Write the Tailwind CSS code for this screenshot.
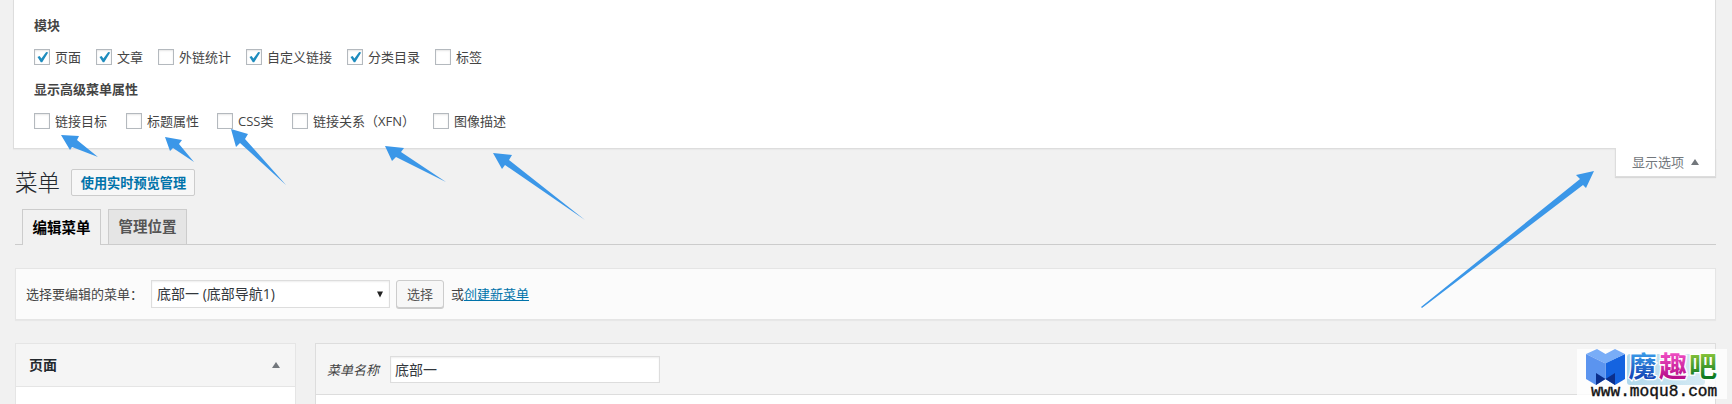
<!DOCTYPE html>
<html lang="zh-CN">
  <head>
    <meta charset="UTF-8" />
    <meta name="viewport" content="width=device-width, initial-scale=1.0" />
    <title>菜单</title>
    <script src="https://cdn.jsdelivr.net/npm/@tailwindcss/browser@4"></script>
  </head>

  <body
    class="relative h-[404px] overflow-hidden bg-[#f1f1f1] pl-[13px] pr-4 font-['Open_Sans','Noto_Sans_CJK_SC',sans-serif] text-[13px] leading-5 text-[#444] whitespace-nowrap"
  >
    <!-- Screen options panel -->
    <div
      class="h-[149px] border border-t-0 border-[#ddd] bg-white pl-5 pt-[15px] shadow-[0_1px_1px_rgba(0,0,0,0.03)]"
    >
      <h2 class="h-5 font-bold text-[#444]">模块</h2>
      <div class="mt-3 flex h-5 items-center">
        <label class="flex w-[62px] items-center gap-[5px]">
          <span class="size-4 border border-[#b4b9be] bg-white shadow-[inset_0_1px_2px_rgba(0,0,0,0.1)]">
            <svg class="size-3.5" viewBox="0 0 14 14"><path d="M2.5 7 4.6 6.1 6.4 8.6 11.2 2.1 13.2 2.6 7.2 12.2 5.8 12.2Z" fill="#1e8cbe" /></svg>
          </span>
          页面
        </label>
        <label class="flex w-[62px] items-center gap-[5px]">
          <span class="size-4 border border-[#b4b9be] bg-white shadow-[inset_0_1px_2px_rgba(0,0,0,0.1)]">
            <svg class="size-3.5" viewBox="0 0 14 14"><path d="M2.5 7 4.6 6.1 6.4 8.6 11.2 2.1 13.2 2.6 7.2 12.2 5.8 12.2Z" fill="#1e8cbe" /></svg>
          </span>
          文章
        </label>
        <label class="flex w-[88px] items-center gap-[5px]">
          <span class="size-4 border border-[#b4b9be] bg-white shadow-[inset_0_1px_2px_rgba(0,0,0,0.1)]"></span>
          外链统计
        </label>
        <label class="flex w-[101px] items-center gap-[5px]">
          <span class="size-4 border border-[#b4b9be] bg-white shadow-[inset_0_1px_2px_rgba(0,0,0,0.1)]">
            <svg class="size-3.5" viewBox="0 0 14 14"><path d="M2.5 7 4.6 6.1 6.4 8.6 11.2 2.1 13.2 2.6 7.2 12.2 5.8 12.2Z" fill="#1e8cbe" /></svg>
          </span>
          自定义链接
        </label>
        <label class="flex w-[88px] items-center gap-[5px]">
          <span class="size-4 border border-[#b4b9be] bg-white shadow-[inset_0_1px_2px_rgba(0,0,0,0.1)]">
            <svg class="size-3.5" viewBox="0 0 14 14"><path d="M2.5 7 4.6 6.1 6.4 8.6 11.2 2.1 13.2 2.6 7.2 12.2 5.8 12.2Z" fill="#1e8cbe" /></svg>
          </span>
          分类目录
        </label>
        <label class="flex items-center gap-[5px]">
          <span class="size-4 border border-[#b4b9be] bg-white shadow-[inset_0_1px_2px_rgba(0,0,0,0.1)]"></span>
          标签
        </label>
      </div>
      <h2 class="mt-3 h-5 font-bold text-[#444]">显示高级菜单属性</h2>
      <div class="mt-3 flex h-5 items-center">
        <label class="flex w-[92px] items-center gap-[5px]">
          <span class="size-4 border border-[#b4b9be] bg-white shadow-[inset_0_1px_2px_rgba(0,0,0,0.1)]"></span>
          链接目标
        </label>
        <label class="flex w-[91px] items-center gap-[5px]">
          <span class="size-4 border border-[#b4b9be] bg-white shadow-[inset_0_1px_2px_rgba(0,0,0,0.1)]"></span>
          标题属性
        </label>
        <label class="flex w-[75px] items-center gap-[5px]">
          <span class="size-4 border border-[#b4b9be] bg-white shadow-[inset_0_1px_2px_rgba(0,0,0,0.1)]"></span>
          CSS类
        </label>
        <label class="flex w-[141px] items-center gap-[5px]">
          <span class="size-4 border border-[#b4b9be] bg-white shadow-[inset_0_1px_2px_rgba(0,0,0,0.1)]"></span>
          链接关系（XFN）
        </label>
        <label class="flex items-center gap-[5px]">
          <span class="size-4 border border-[#b4b9be] bg-white shadow-[inset_0_1px_2px_rgba(0,0,0,0.1)]"></span>
          图像描述
        </label>
      </div>
    </div>

    <!-- Heading, with the screen options toggle hanging from the panel -->
    <div class="flex h-[60px] items-start justify-between">
      <div class="ml-0.5 mt-[19px] flex h-7 items-center">
        <h1 class="w-14 pt-0.5 text-[22.5px] font-light text-[#23282d]">菜单</h1>
        <a class="flex h-[27px] w-[124px] items-center justify-center rounded-xs border border-[#ccc] bg-[#f7f7f7] pl-px pt-px text-[13.2px] font-bold text-[#0073aa]">使用实时预览管理</a>
      </div>
      <button
        class="relative -mt-px flex h-[29px] w-[101px] items-center border border-t-0 border-[#ddd] bg-white pb-px pl-4 text-[#72777c] shadow-[0_1px_1px_rgba(0,0,0,0.1)]"
      >
        显示选项
        <svg class="ml-[7px] h-1.5 w-2" viewBox="0 0 8 6"><path d="M4 0 8 6H0Z" fill="#72777c" /></svg>
      </button>
    </div>

    <div class="ml-0.5">
      <nav class="flex h-9 items-start gap-[7px] border-b border-[#ccc] pl-[7px] text-[14.5px] font-bold">
        <a class="flex h-9 w-[79px] items-center justify-center border border-b-0 border-[#ccc] bg-[#f1f1f1] text-black">编辑菜单</a>
        <a class="flex h-[35px] w-[79px] items-center justify-center border border-b-0 border-[#ccc] bg-[#e5e5e5] text-[#555]">管理位置</a>
      </nav>

      <!-- Menu picker -->
      <div
        class="mt-[23px] flex h-[52px] items-center border border-[#e5e5e5] bg-[#fbfbfb] pl-2.5 shadow-[0_1px_1px_rgba(0,0,0,0.04)]"
      >
        <span class="w-[125px]">选择要编辑的菜单：</span>
        <div class="flex h-7 w-[239px] items-center justify-between border border-[#ddd] bg-white pl-[5px] pr-1.5 text-sm text-[#32373c] shadow-[inset_0_1px_2px_rgba(0,0,0,0.07)]">
          <span>底部一 (底部导航1)</span>
          <svg class="h-[7px] w-1.5" viewBox="0 0 6 7"><path d="M0 0.5H6L3 6.5Z" fill="#222" /></svg>
        </div>
        <button class="ml-1.5 h-7 w-12 rounded-[3px] border border-[#ccc] bg-[#f7f7f7] leading-[26px] text-[#555] shadow-[0_1px_0_#ccc]">选择</button>
        <span class="ml-[7px]">或<a class="text-[#0073aa] underline">创建新菜单</a></span>
      </div>

      <div class="mt-[23px] flex gap-[19px]">
        <div class="h-20 w-[281px] border border-[#e5e5e5] bg-white">
          <div class="flex h-[43px] items-center justify-between border-b border-[#e5e5e5] bg-[#f5f5f5] pl-[13px] pr-[15px]">
            <h3 class="text-sm font-bold text-[#23282d]">页面</h3>
            <svg class="h-1.5 w-2" viewBox="0 0 8 6"><path d="M4 0 8 6H0Z" fill="#72777c" /></svg>
          </div>
        </div>
        <div class="h-20 flex-1 border border-[#ddd] bg-white">
          <div class="flex h-[51px] items-center border-b border-[#ddd] bg-[#f5f5f5] pl-[11px]">
            <span class="w-[63px] pt-0.5 italic">菜单名称</span>
            <div class="h-[27px] w-[270px] border border-[#ddd] bg-white pl-1 text-sm leading-[26px] text-[#32373c] shadow-[inset_0_1px_2px_rgba(0,0,0,0.07)]">底部一</div>
          </div>
        </div>
      </div>
    </div>

    <!-- Annotation arrows -->
    <svg class="absolute top-0 left-0 h-[404px] w-[1732px]" viewBox="0 0 1732 404" fill="#3b97e8">
      <path d="M61 135 79 136 77 140 98 157 72 147 70 150Z" />
      <path d="M165 137 182 140 179 144 194 162 173 148 170 151Z" />
      <path d="M231 129 248 134 245 139 286 185 240 143 236 147Z" />
      <path d="M385 146 404 148 401 152 446 182 396 157 392 161Z" />
      <path d="M493 153 512 155 509 160 585 220 505 165 502 169Z" />
      <path d="M1594 171 1576 175 1580 179 1421 307 1422 308 1583 185 1586 188Z" />
    </svg>

    <!-- Site badge -->
    <svg class="absolute top-[339px] left-[1577px] h-[65px] w-[150px]" viewBox="0 -10 150 65">
      <defs>
        <linearGradient id="blue" x1="0" y1="0" x2="0" y2="1">
          <stop offset="0.2" stop-color="#3a9be8" />
          <stop offset="0.8" stop-color="#1548b8" />
        </linearGradient>
        <linearGradient id="pink" x1="0" y1="0" x2="0" y2="1">
          <stop offset="0.2" stop-color="#f04fc4" />
          <stop offset="0.8" stop-color="#b8108c" />
        </linearGradient>
        <linearGradient id="green" x1="0" y1="0" x2="0" y2="1">
          <stop offset="0.2" stop-color="#8ac63a" />
          <stop offset="0.8" stop-color="#0e7a22" />
        </linearGradient>
        <linearGradient id="sky" x1="0" y1="0" x2="1" y2="0">
          <stop offset="0" stop-color="#b0d8ec" />
          <stop offset="1" stop-color="#d7ebf4" />
        </linearGradient>
      </defs>
      <rect width="150" height="50" fill="#fff" fill-opacity="0.8" />
      <rect x="50" y="5" width="78" height="31" rx="3" fill="url(#sky)" />
      <path d="M28.5 14 48 5V30L38 36 28.5 30Z" fill="#1463e0" />
      <path d="M9 5 20 0 28.5 5 38 0 48 5 28.5 14.5Z" fill="#79adf7" />
      <path d="M9 5 28.5 14.5V30L19 36 9 30Z" fill="#5b94ef" />
      <path d="M19 24 28.5 30 19 36Z" fill="#0b2f8c" />
      <path d="M38 24 28.5 30 38 36Z" fill="#0b2f8c" />
      <g class="font-['Noto_Sans_CJK_SC',sans-serif] text-[28px] font-bold" stroke="#fff" stroke-width="2.5" paint-order="stroke">
        <text x="51.5" y="28" fill="url(#blue)">魔</text>
        <text x="82" y="28" fill="url(#pink)">趣</text>
        <text x="112" y="28" fill="url(#green)">吧</text>
      </g>
      <text class="font-['Liberation_Mono',monospace] text-[16.2px]" x="14" y="47" fill="#111" stroke="#111" stroke-width="0.4">www.moqu8.com</text>
    </svg>
  </body>
</html>
